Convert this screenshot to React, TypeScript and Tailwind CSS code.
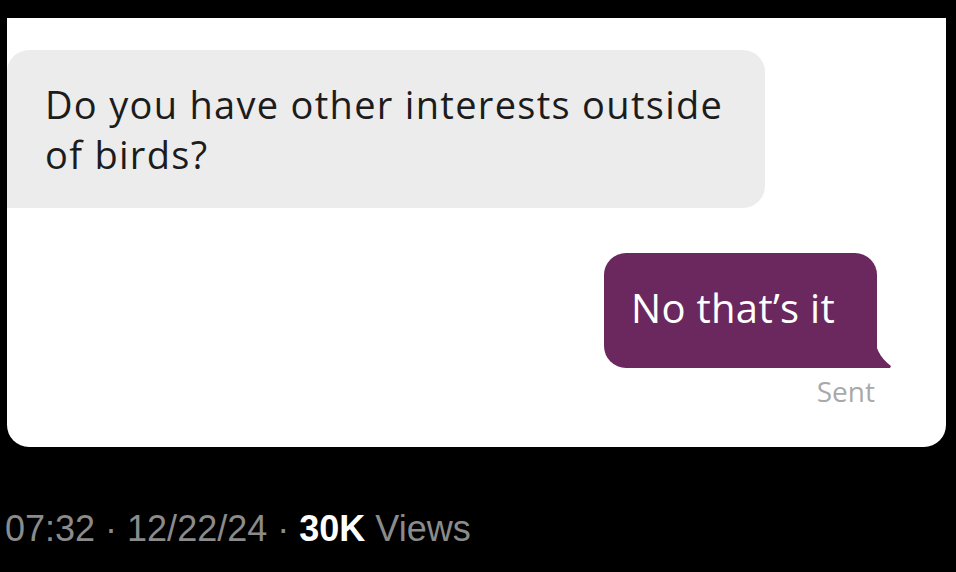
import React from 'react';

const msgFont = { fontFamily: '"Open Sans", "Noto Sans", sans-serif' };

export default function App() {
  return (
    <div className="w-[956px] h-[572px] bg-black overflow-hidden pt-[18px]">
      {/* Chat card */}
      <div className="ml-[7px] w-[939px] h-[429px] bg-white rounded-b-[22px] pt-[32px]" style={msgFont}>
        <div className="w-[758px] h-[158px] bg-[#ececec] rounded-tl-[22px] rounded-r-[22px] pl-[38px] pt-[29px]">
          <p className="text-[38px] leading-[50px] tracking-[1.3px] text-[#1c1c1c]">
            Do you have other interests outside
            <br />
            of birds?
          </p>
        </div>

        <div className="flex justify-end mr-[69px] mt-[45px]">
          <div className="relative w-[273px] h-[115px] bg-[#6a285e] rounded-tl-[22px] rounded-tr-[22px] rounded-bl-[22px] pl-[27px] pt-[35px]">
            <span className="block text-[40px] tracking-[0.3px] text-white leading-none">No that’s it</span>
            <svg
              className="absolute right-[-17px] bottom-0"
              width="20"
              height="36"
              viewBox="0 0 20 36"
            >
              <path d="M0 0 C0 14 6 26 17 34 L16 36 L0 36 Z" fill="#6a285e" />
            </svg>
          </div>
        </div>
        <div className="flex justify-end mr-[71px] mt-[9px]">
          <span className="text-[28px] text-[#a9a9a9] leading-none">Sent</span>
        </div>
      </div>

      {/* Tweet meta */}
      <div
        className="mt-[64px] ml-[5px] text-[36px] text-[#8b8b8b] leading-none"
        style={{ fontFamily: '"Liberation Sans", Arial, sans-serif' }}
      >
        07:32 · 12/22/24 · <span className="font-bold text-white">30K</span> Views
      </div>
    </div>
  );
}
